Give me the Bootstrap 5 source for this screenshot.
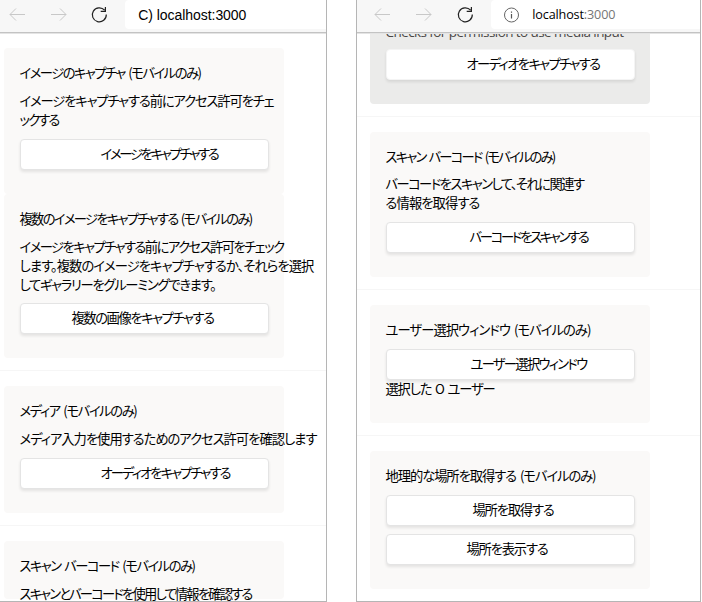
<!DOCTYPE html>
<html lang="ja">
<head>
<meta charset="utf-8">
<meta name="viewport" content="width=device-width, initial-scale=1">
<title>localhost:3000</title>
<link href="https://cdn.jsdelivr.net/npm/bootstrap@5.3.0/dist/css/bootstrap.min.css" rel="stylesheet">
<style>
body{width:702px;height:602px;overflow:hidden;background:#fff;color:#000;font:13.3px/19px "Noto Sans CJK JP",sans-serif}
.pane{height:602px;overflow:hidden;border-right:1px solid #b5b5b5;border-bottom:1px solid #b5b5b5}
.pane-a{width:327px}
.pane-b{width:345px;margin-left:29px;border-left:1px solid #b5b5b5}
.bar{height:33px;background:#f7f7f7;border-bottom:1px solid #c3c3c3;box-shadow:0 1px 0 #e4e4e4;position:relative;z-index:2}
.bar svg{display:block;fill:none;flex:none}
.url{height:29px;background:#fff;border-radius:4px 0 0 4px;white-space:pre}
.pane-a .url{display:flow-root;margin-left:17px;padding-left:13px;font:14px/32px "Liberation Sans",sans-serif}
.pane-b .url{margin-left:17px;padding-left:12px;font:12.6px/30px "Open Sans",sans-serif}
.url i{font-style:normal;color:#767676}
.url .ln{margin-left:.3px}
.info{margin-right:13px}
.tile{width:280px;background:#faf9f8;border-radius:4px;padding:16px 0 0 16px;flex:none}
.pane-a .tile{margin-left:4px}
.pane-b .tile{margin-left:13px}
.tile-dark{background:#ebebea;border-radius:0 0 4px 4px;padding-top:0}
.ttl,.dsc,.en{display:flow-root}
.ttl{height:20px;line-height:20px}
.dsc{margin-top:8px}
.pane-b .dsc{line-height:18.5px}
.ln{display:block;width:max-content;white-space:pre;font-feature-settings:"palt";margin:-1px 0 1px -.5px}
.tile .ln{word-spacing:2px}
.key{display:flex;align-items:center;width:249px;height:31px;margin-top:9px;background:#fff;border:1px solid #e4e4e4;border-radius:4px;box-shadow:0 2px 3px rgba(0,0,0,.09)}
.en{font:13.5px/18px "Open Sans",sans-serif;color:#484644;height:17px;margin-top:-10px}
.tile .en .ln{font-feature-settings:normal;word-spacing:0;margin-top:0}
.tile-dark .key{border-color:#f4f4f4}
.rule{height:1px;background:#f6f6f6;margin:12px 0 15px;flex:none}
.h1a{height:146px;margin-top:15px}.h2a{height:164px}.h3a{height:127px}.h4a{height:58px}
.h1b{height:71px}.h2b{height:145px}.h3b{height:118px}.h4b{height:138px}
.s51{padding-left:51px}.s80{padding-left:80px}
.s82{padding-left:83px}.s84{padding-left:84px}.s86{padding-left:86px}
</style>
<script src="https://cdn.jsdelivr.net/npm/bootstrap@5.3.0/dist/js/bootstrap.bundle.min.js"></script>
</head>
<body class="d-flex">
<section class="pane pane-a d-flex flex-column">
  <div class="bar d-flex flex-shrink-0">
    <svg width="108" height="29" stroke-width="1"><path d="M25 14.5H10M16 8.5l-6 6 6 6M51 14.5h15M60 8.5l6 6-6 6" stroke="#c8c8c8"/><path d="M104.6 10.2A7 7 0 1 0 106.3 14.5M105.4 7v4.3h-4.7" stroke="#222" stroke-width="1.2"/></svg>
    <div class="url flex-grow-1"><span class="ln" data-w="108">C) localhost:3000</span></div>
  </div>
  <div class="tile h1a">
    <div class="ttl"><span class="ln" data-w="181">イメージのキャプチャ (モバイルのみ)</span></div>
    <div class="dsc"><span class="ln" data-w="254">イメージをキャプチャする前にアクセス許可をチェ</span><span class="ln" data-w="39">ックする</span></div>
    <div class="key s80"><span class="ln" data-w="117">イメージをキャプチャする</span></div>
  </div>
  <div class="tile h2a">
    <div class="ttl"><span class="ln" data-w="232">複数のイメージをキャプチャする (モバイルのみ)</span></div>
    <div class="dsc"><span class="ln" data-w="264">イメージをキャプチャする前にアクセス許可をチェック</span><span class="ln" data-w="294">します。複数のイメージをキャプチャするか、それらを選択</span><span class="ln" data-w="196">してギャラリーをグルーミングできます。</span></div>
    <div class="key s51 mt-2"><span class="ln" data-w="142">複数の画像をキャプチャする</span></div>
  </div>
  <div class="rule"></div>
  <div class="tile h3a">
    <div class="ttl"><span class="ln" data-w="117">メディア (モバイルのみ)</span></div>
    <div class="dsc"><span class="ln" data-w="297">メディア入力を使用するためのアクセス許可を確認します</span></div>
    <div class="key s80"><span class="ln" data-w="129">オーディオをキャプチャする</span></div>
  </div>
  <div class="rule"></div>
  <div class="tile h4a">
    <div class="ttl"><span class="ln" data-w="175">スキャン バーコード (モバイルのみ)</span></div>
    <div class="dsc"><span class="ln" data-w="232">スキャンとバーコードを使用して情報を確認する</span></div>
  </div>
</section>
<section class="pane pane-b d-flex flex-column">
  <div class="bar d-flex flex-shrink-0">
    <svg width="117" height="29" stroke-width="1"><path d="M33 14.5H18M24 8.5l-6 6 6 6M59 14.5h15M68 8.5l6 6-6 6" stroke="#c8c8c8"/><path d="M113.6 10.2A7 7 0 1 0 115.3 14.5M114.4 7v4.3h-4.7" stroke="#222" stroke-width="1.2"/></svg>
    <div class="url d-flex align-items-center flex-grow-1">
      <svg class="info" width="16" height="16"><circle cx="8.5" cy="8" r="7" stroke="#666"/><path d="M8.5 7v4.5M8.5 4.5v1.3" stroke="#555" stroke-width="1.2"/></svg>
      <span class="ln mt-0 mb-0" data-w="83">localhost<i>:3000</i></span>
    </div>
  </div>
  <div class="tile tile-dark h1b">
    <div class="en"><span class="ln" data-w="238">Checks for permission to use media input</span></div>
    <div class="key s80"><span class="ln" data-w="133">オーディオをキャプチャする</span></div>
  </div>
  <div class="rule"></div>
  <div class="tile h2b">
    <div class="ttl"><span class="ln" data-w="169">スキャン バーコード (モバイルのみ)</span></div>
    <div class="dsc"><span class="ln" data-w="198">バーコードをスキャンして、それに関連す</span><span class="ln" data-w="94">る情報を取得する</span></div>
    <div class="key s82"><span class="ln" data-w="118">バーコードをスキャンする</span></div>
  </div>
  <div class="rule"></div>
  <div class="tile h3b">
    <div class="ttl"><span class="ln" data-w="205">ユーザー選択ウィンドウ (モバイルのみ)</span></div>
    <div class="key s84 mt-2"><span class="ln" data-w="116">ユーザー選択ウィンドウ</span></div>
    <div class="d-flex"><span class="ln" data-w="109">選択した O ユーザー</span></div>
  </div>
  <div class="rule"></div>
  <div class="tile h4b">
    <div class="ttl"><span class="ln" data-w="210">地理的な場所を取得する (モバイルのみ)</span></div>
    <div class="key s86 mt-2"><span class="ln" data-w="81">場所を取得する</span></div>
    <div class="key s80 mt-2"><span class="ln" data-w="81">場所を表示する</span></div>
  </div>
</section>
<script>
// Spread each line of text over its set measure.
document.querySelectorAll('.ln[data-w]').forEach(function (el) {
  var gap = (el.dataset.w - el.getBoundingClientRect().width) / el.textContent.length;
  el.style.letterSpacing = gap.toFixed(3) + 'px';
});
</script>
</body>
</html>
